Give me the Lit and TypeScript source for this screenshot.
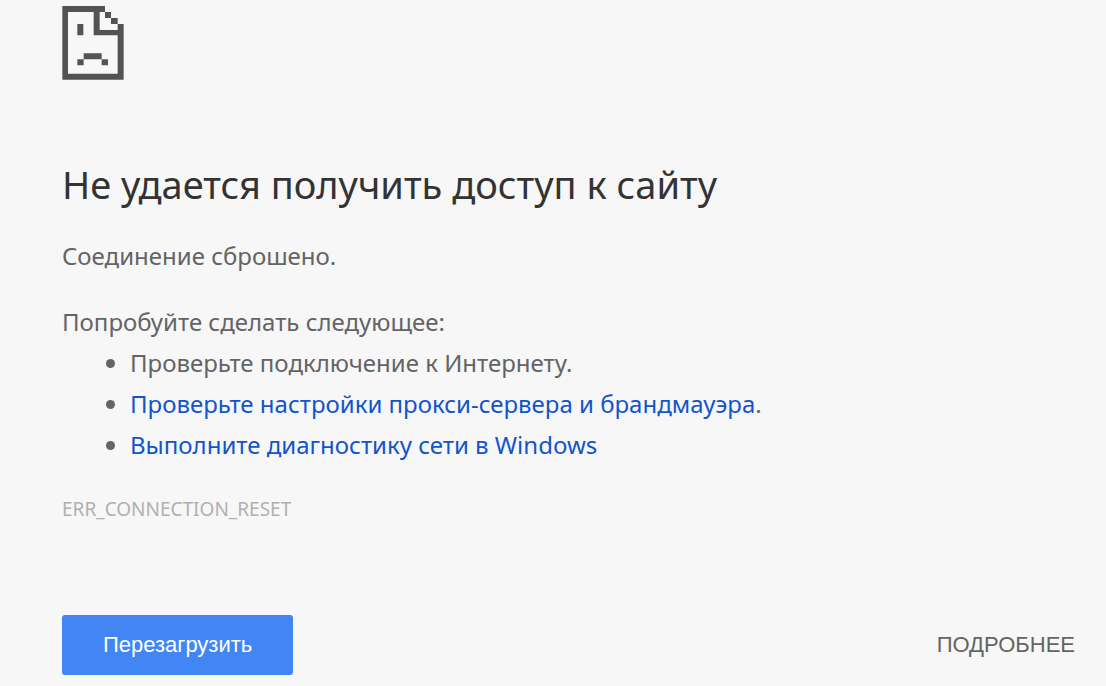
import { LitElement, html, css } from "lit";
import { customElement } from "lit/decorators.js";

@customElement("app-root")
export class AppRoot extends LitElement {
  static styles = css`
    :host {
      display: block;
      min-height: 100vh;
      box-sizing: border-box;
      padding: 6px 31px 11px 62px;
      background: #f7f7f7;
      color: #646464;
      font: 24px/40px "Noto Sans", "Open Sans", sans-serif;
    }
    .icon {
      display: block;
      width: 62px;
      height: 74px;
    }
    h1 {
      margin: 78px 0 26px;
      color: #333;
      font-size: 38px;
      font-weight: 400;
      line-height: 52px;
    }
    p {
      margin: 0;
    }
    .hint {
      margin-top: 26px;
    }
    ul {
      margin: 0;
      padding-left: 68px;
      line-height: 41px;
    }
    a {
      color: #1155cc;
      text-decoration: none;
    }
    .code {
      margin-top: 31px;
      color: #b0b0b0;
      font-size: 19px;
      line-height: 26px;
    }
    .actions {
      display: flex;
      justify-content: space-between;
      align-items: center;
      margin-top: 93px;
    }
    button {
      border: 0;
      padding: 0;
      background: none;
      color: #646464;
      font: 22px/60px "Liberation Sans", Arial, sans-serif;
      cursor: pointer;
    }
    .reload {
      padding: 0 41px;
      border-radius: 3px;
      background: #4285f4;
      color: #fff;
    }
  `;

  render() {
    return html`
      <main>
        <svg class="icon" viewBox="0 0 186 222" fill="#535353" aria-hidden="true">
          <path
            d="M1 0H129V18H113V72H167V54H185V221H1Z M18 18V203H167V88H95V18Z"
            fill-rule="evenodd"
          />
          <path
            d="M129 18H147V36H129Z M147 36H167V54H147Z M46 54H64V88H46Z M65 142H119V160H65Z M46 160H65V178H46Z M119 160H138V178H119Z"
          />
        </svg>
        <h1>Не удается получить доступ к сайту</h1>
        <p>Соединение сброшено.</p>
        <p class="hint">Попробуйте сделать следующее:</p>
        <ul>
          <li>Проверьте подключение к Интернету.</li>
          <li><a href="#proxy">Проверьте настройки прокси-сервера и брандмауэра</a>.</li>
          <li><a href="#diagnose">Выполните диагностику сети в Windows</a></li>
        </ul>
        <p class="code">ERR_CONNECTION_RESET</p>
        <div class="actions">
          <button class="reload" type="button">Перезагрузить</button>
          <button type="button">ПОДРОБНЕЕ</button>
        </div>
      </main>
    `;
  }
}
